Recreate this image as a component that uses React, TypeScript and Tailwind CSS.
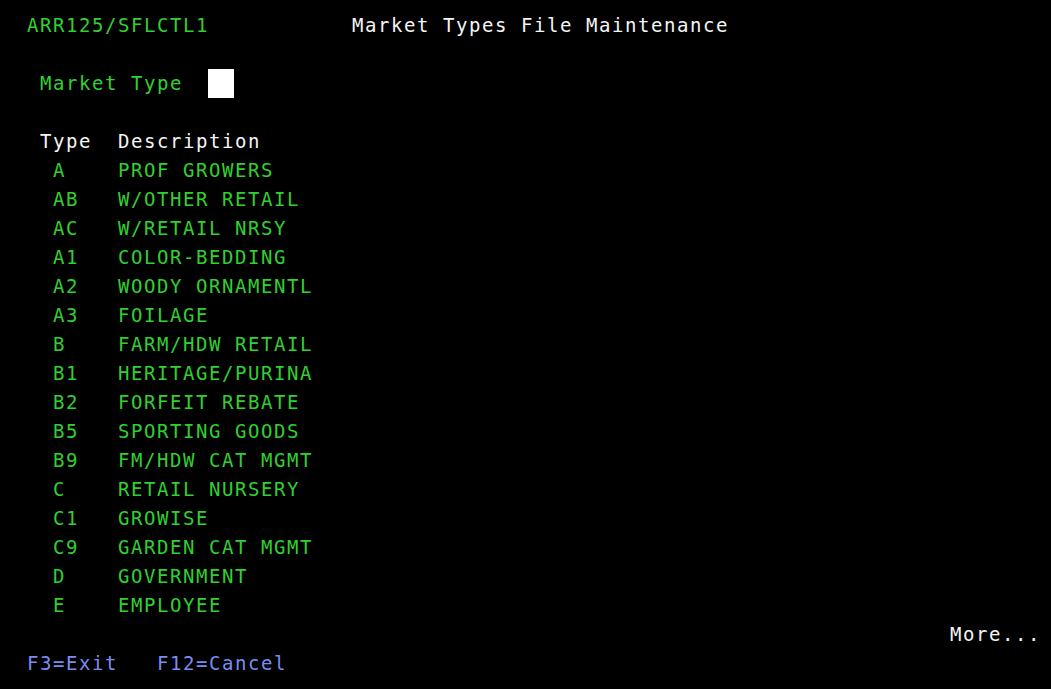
const rows: [string, string][] = [
  ["A", "PROF GROWERS"],
  ["AB", "W/OTHER RETAIL"],
  ["AC", "W/RETAIL NRSY"],
  ["A1", "COLOR-BEDDING"],
  ["A2", "WOODY ORNAMENTL"],
  ["A3", "FOILAGE"],
  ["B", "FARM/HDW RETAIL"],
  ["B1", "HERITAGE/PURINA"],
  ["B2", "FORFEIT REBATE"],
  ["B5", "SPORTING GOODS"],
  ["B9", "FM/HDW CAT MGMT"],
  ["C", "RETAIL NURSERY"],
  ["C1", "GROWISE"],
  ["C9", "GARDEN CAT MGMT"],
  ["D", "GOVERNMENT"],
  ["E", "EMPLOYEE"],
];

const green = "text-[#30d030]";
const white = "text-[#f4f4f4]";
const blue = "text-[#7b8cf0]";

// one 80-col screen line, 13px per column, 29px per row
function Line({ children }: { children?: React.ReactNode }) {
  return <div className="flex h-[29px] items-center whitespace-pre">{children}</div>;
}

function Cell({ col, cls, children }: { col: number; cls?: string; children?: React.ReactNode }) {
  return (
    <span className={cls} style={{ width: col * 13 }}>
      {children}
    </span>
  );
}

export default function App() {
  return (
    <div
      className="w-[1051px] h-[689px] bg-black pt-[11px] pl-[1px] text-[19px] tracking-[1.56px] leading-none overflow-hidden"
      style={{ fontFamily: '"DejaVu Sans Mono", monospace' }}
    >
      <Line>
        <Cell col={2} />
        <Cell col={25} cls={green}>ARR125/SFLCTL1</Cell>
        <span className={white}>Market Types File Maintenance</span>
      </Line>
      <Line />
      <Line>
        <Cell col={3} />
        <Cell col={13} cls={green}>Market Type</Cell>
        <span className="-ml-[1px] w-[26px] h-[29px] bg-white" />
      </Line>
      <Line />
      <Line>
        <Cell col={3} />
        <Cell col={6} cls={white}>Type</Cell>
        <span className={white}>Description</span>
      </Line>
      {rows.map(([t, d]) => (
        <Line key={t}>
          <Cell col={4} />
          <Cell col={5} cls={green}>{t}</Cell>
          <span className={green}>{d}</span>
        </Line>
      ))}
      <Line>
        <Cell col={73} />
        <span className={white}>More...</span>
      </Line>
      <Line>
        <Cell col={2} />
        <Cell col={10} cls={blue}>F3=Exit</Cell>
        <span className={blue}>F12=Cancel</span>
      </Line>
    </div>
  );
}
